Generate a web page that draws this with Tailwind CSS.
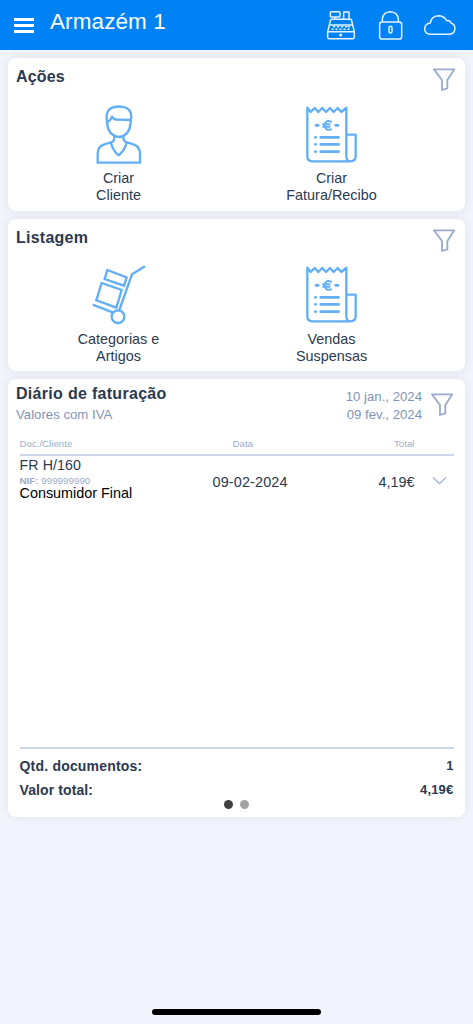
<!DOCTYPE html>
<html lang="pt">
<head>
<meta charset="utf-8">
<meta name="viewport" content="width=device-width, initial-scale=1">
<title>Armazém 1</title>
<script src="https://cdn.jsdelivr.net/npm/@tailwindcss/browser@4"></script>
</head>
<body class="bg-[#f1f4fc] font-['Liberation_Sans',Arial,sans-serif] text-[#2b3950]">
<svg class="hidden">
  <symbol id="funnel" viewBox="366 200 72 75">
    <path d="M372 207H433L412 239V264L396 269V239Z" fill="none" stroke="#9aaccb" stroke-width="5.5" stroke-linejoin="round"/>
  </symbol>
  <symbol id="receipt" viewBox="75 30 159 177">
    <g fill="none" stroke="#62aff5" stroke-width="7" stroke-linecap="round" stroke-linejoin="round">
      <path d="M82 38L92 51L104 39L115 51L127 39L138 51L150 39L161 51L173 39L184 51L199 38V186Q200 199 211 199Q227 199 227 184V119H200M82 38V184Q82 199 97 199H211"/>
      <path stroke-width="8" d="M122 127H176M122 148H176M122 170H176M106 127h1M106 148h1M106 170h1M108 91H115M167 91H174"/>
      <path stroke-width="6" d="M153 80Q136 73 134 91Q136 109 153 103M129 88H149M129 95H149"/>
    </g>
  </symbol>
</svg>
<div class="flex h-[1024px] w-[473px] flex-col overflow-hidden">
  <header class="flex h-[50px] shrink-0 items-start bg-[#0082f5] text-white">
    <div class="mt-[18px] ml-3.5 flex w-5 flex-col gap-[3.5px]">
      <div class="h-[2.7px] bg-white"></div><div class="h-[2.7px] bg-white"></div><div class="h-[2.7px] bg-white"></div>
    </div>
    <h1 class="mt-[7px] ml-4 text-[22.5px] leading-[29px] tracking-[0.1px]">Armazém 1</h1>
    <svg class="mt-2 ml-auto mr-[17px] h-[34px] w-[130px]" viewBox="48 24 390 102" fill="none" stroke="#e6f3ff" stroke-width="4.5" stroke-linejoin="round" stroke-linecap="round">
      <path d="M64 35H87Q90 35 90 38V48Q90 51 87 51H64Q61 51 61 48V38Q61 35 64 35ZM74 51V58M101 58V36H117V58M65 58H121Q124 58 125 62L128 75H58L61 62Q62 58 65 58ZM58 75L53 95H133L128 75M53 95V112Q53 116 57 116H129Q133 116 133 112V95"/>
      <path d="M71 80h3M83 80h3M95 80h3M107 80h3M66 88h3M78 88h3M90 88h3M102 88h3M114 88h3M116 80h2"/>
      <circle cx="92" cy="105" r="2.5" fill="#e6f3ff"/>
      <path d="M217 66V57Q219 36 241 35Q263 36 265 57V66"/>
      <rect x="209" y="66" width="66" height="51" rx="7"/>
      <rect x="237" y="79" width="9" height="20" rx="4.5"/>
      <path d="M359 103Q344 101 344 85Q346 70 361 69Q364 48 385 47Q402 47 410 62Q420 60 423 69Q435 73 435 86Q433 103 417 103Z"/>
    </svg>
  </header>

  <main class="flex flex-col gap-2 px-2 pt-2">
    <section class="h-[152.5px] rounded-lg bg-white shadow-[0_0_10px_rgba(70,50,20,0.09)]">
      <div class="flex h-[47px] items-start justify-between pr-[9px] pl-2">
        <h2 class="mt-[9px] text-base leading-5 font-bold tracking-[0.15px]">Ações</h2>
        <svg class="mt-[9px] h-[25px] w-6"><use href="#funnel"/></svg>
      </div>
      <div class="grid w-[430px] grid-cols-2 pl-1 text-center text-[14.4px] leading-[16.5px]">
        <div class="flex flex-col items-center">
          <svg class="-mt-px h-[62px] w-12" viewBox="43 24 144 186" fill="none" stroke="#62aff5" stroke-width="7" stroke-linejoin="round" stroke-linecap="round">
            <path d="M79 79Q72 38 102 33Q120 29 138 36Q157 47 150 79M79 79Q82 119 115 123Q147 119 150 79M79 79Q89 75 94 62Q99 72 112 71L148 72"/>
            <path d="M101 120Q102 134 94 138L69 146Q51 152 51 174V200H178V174Q178 152 160 146L136 138Q127 134 128 120M91 140Q96 163 114 178Q134 161 138 139"/>
          </svg>
          <p class="mt-1">Criar<br>Cliente</p>
        </div>
        <div class="flex flex-col items-center">
          <svg class="h-[59px] w-[53px]"><use href="#receipt"/></svg>
          <p class="mt-[6px]">Criar<br>Fatura/Recibo</p>
        </div>
      </div>
    </section>

    <section class="h-[152.5px] rounded-lg bg-white shadow-[0_0_10px_rgba(70,50,20,0.09)]">
      <div class="flex h-[46.5px] items-start justify-between pr-[9px] pl-2">
        <h2 class="mt-[9px] text-base leading-5 font-bold tracking-[0.25px]">Listagem</h2>
        <svg class="mt-[9px] h-[25px] w-6"><use href="#funnel"/></svg>
      </div>
      <div class="grid w-[430px] grid-cols-2 pl-1 text-center text-[14.4px] leading-[16.5px]">
        <div class="flex flex-col items-center">
          <svg class="-mt-px h-[61px] w-[54px]" viewBox="64 27 162 183" fill="none" stroke="#62aff5" stroke-width="7">
            <path d="M110 45L168 67L160 92L102 72ZM93 84L153 105L137 158L77 136ZM66 149L126 172M223 34L184 58L146 165"/>
            <circle cx="142" cy="185" r="19"/>
          </svg>
          <p class="mt-[6px]">Categorias e<br>Artigos</p>
        </div>
        <div class="flex flex-col items-center">
          <svg class="h-[59px] w-[53px]"><use href="#receipt"/></svg>
          <p class="mt-[7px]">Vendas<br>Suspensas</p>
        </div>
      </div>
    </section>

    <section class="flex h-[438px] flex-col rounded-lg bg-white shadow-[0_0_10px_rgba(70,50,20,0.09)]">
      <div class="flex h-[56px] pr-[11px] pl-2 text-[#8195b8]">
        <div class="pt-[5px]">
          <h2 class="text-base leading-5 font-bold tracking-[0.3px] text-[#2b3950]">Diário de faturação</h2>
          <p class="mt-px text-[13.2px] leading-5">Valores com IVA</p>
        </div>
        <p class="mt-[9px] mr-2 ml-auto text-right text-[13.2px] leading-[17.5px]">10 jan., 2024<br>09 fev., 2024</p>
        <svg class="mt-[13px] h-[25px] w-6"><use href="#funnel"/></svg>
      </div>
      <div class="mx-[11.5px] grid h-[21px] grid-cols-[213px_147px_35px] border-b-2 border-[#cdd7e7] text-[9.7px] leading-[18px] text-[#9badca]">
        <span>Doc./Cliente</span><span>Data</span><span class="text-right">Total</span>
      </div>
      <div class="mx-[11.5px] flex items-center">
        <div class="w-[193px]">
          <p class="text-[14.2px] leading-[19px] tracking-[0.1px]">FR H/160</p>
          <p class="text-[9.8px] leading-[11px] text-[#9badca]"><b>NIF:</b> 999999990</p>
          <p class="text-[14.4px] leading-[14px] text-black">Consumidor Final</p>
        </div>
        <p class="mt-[9px] text-[14.4px] tracking-[0.15px]">09-02-2024</p>
        <p class="mt-[9px] ml-auto text-[14.4px]">4,19€</p>
        <svg class="mt-[5px] mr-[7px] ml-[17px] h-[9px] w-[15px]" viewBox="0 0 15 9" fill="none" stroke="#a8b9d3" stroke-width="1.4"><path d="M1 1.5L7.5 7.5L14 1.5"/></svg>
      </div>
      <div class="mx-[11.5px] mt-auto h-[70px] border-t-2 border-[#cdd7e7] pt-[5px] text-[14px] font-bold">
        <div class="flex justify-between leading-6"><span class="tracking-[0.2px]">Qtd. documentos:</span><span class="text-[13px]">1</span></div>
        <div class="flex justify-between leading-6"><span class="tracking-[0.1px]">Valor total:</span><span class="text-[13px] tracking-[0.2px]">4,19€</span></div>
        <div class="-mt-0.5 flex justify-center gap-[6.5px]"><i class="size-[9px] rounded-full bg-[#414141]"></i><i class="size-[9px] rounded-full bg-[#a3a3a3]"></i></div>
      </div>
    </section>
  </main>
  <div class="mt-auto mb-[9px] ml-[152px] h-[6px] w-[169px] shrink-0 rounded-full bg-black"></div>
</div>
</body>
</html>
